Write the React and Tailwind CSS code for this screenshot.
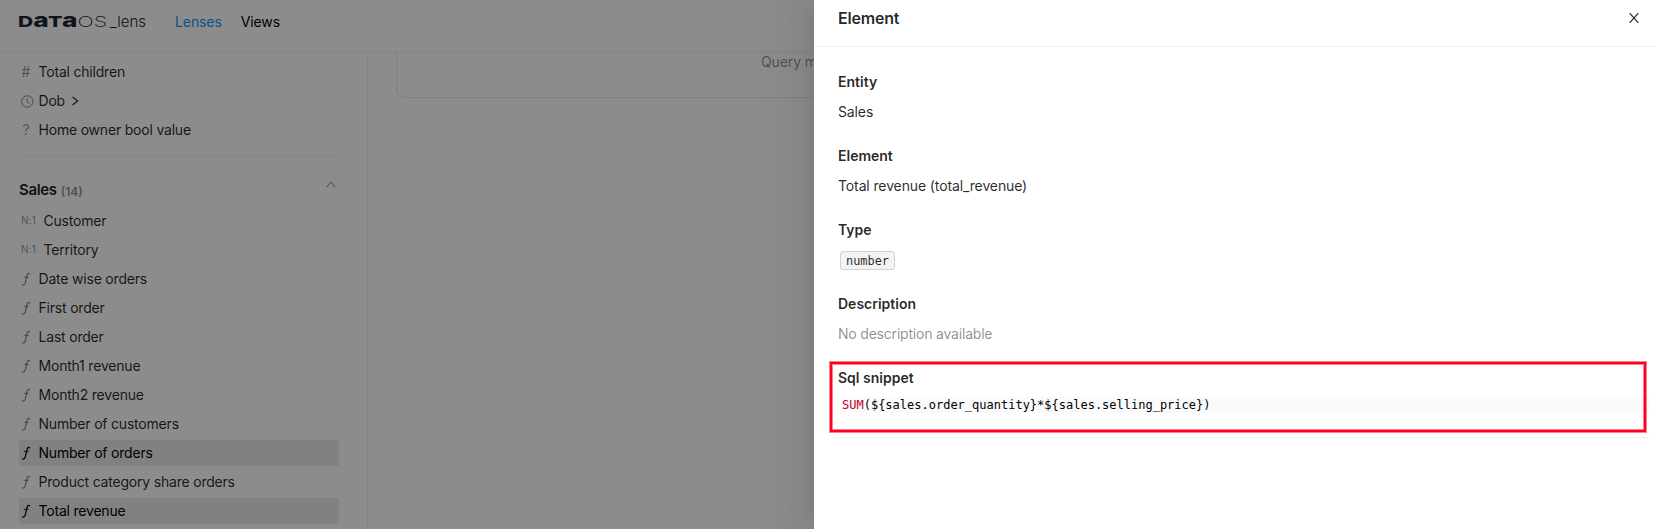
import React from "react";

const UI = "font-['Inter',sans-serif]";

function FieldIcon({ kind, active }) {
  const tone = active ? "text-black" : "text-black/45";
  if (kind === "time") {
    return (
      <svg className={`mt-[2px] h-[13px] w-[13px] ${tone}`} viewBox="0 0 13 13" fill="none" stroke="currentColor">
        <circle cx="6.3" cy="6.5" r="5.7" />
        <path d="M6.2 3v4l2.4 1.7" />
      </svg>
    );
  }
  if (kind === "fn") {
    return (
      <svg className={`mt-[2px] h-4 w-[10px] ${tone}`} viewBox="0 0 10 16" fill="none" stroke="currentColor" strokeLinecap="round">
        <path d="M8.7 2.8C7.8 1.8 6.7 2.2 6.2 4L4.2 12C3.7 13.8 2.6 14.4 1.4 13.8" strokeWidth="1.2" />
        <path d="M3.1 6.3h4.1" strokeWidth="0.9" />
      </svg>
    );
  }
  if (kind === "join") {
    return <span className={`text-[10px] tracking-[0.2px] ${tone}`}>N:1</span>;
  }
  return <span className={`w-[10px] text-center text-[14px] ${tone}`}>{kind}</span>;
}

function Field({ kind, label, active, expandable }) {
  return (
    <li className={`flex h-[26px] items-center rounded-[2px] pb-[2px] pl-[2px] ${active ? "bg-[#ececec] text-black" : "text-black/85"}`}>
      <span className={`flex shrink-0 items-center ${kind === "join" ? "w-[22.5px]" : "w-[17.5px]"}`}>
        <FieldIcon kind={kind} active={active} />
      </span>
      <span className="whitespace-nowrap tracking-[-0.2px]">{label}</span>
      {expandable && (
        <svg className="ml-[7px] mt-[2px] h-[10px] w-[7px]" viewBox="0 0 7 10" fill="none" stroke="currentColor" strokeWidth="1.1">
          <path d="M.5 1l5.2 4L.5 9" />
        </svg>
      )}
    </li>
  );
}

function Logo() {
  return (
    <svg className="h-[36px] w-[132px]" viewBox="-2 -6 132 36" fontFamily="Inter, sans-serif">
      <g fill="#202630" fontWeight="800">
        <text x="-1" y="17.2" fontSize="15.2" textLength="15.2" lengthAdjust="spacingAndGlyphs">D</text>
        <text x="14.3" y="17.2" fontSize="19.5" textLength="15.5" lengthAdjust="spacingAndGlyphs">a</text>
        <text x="29" y="17.2" fontSize="15.2" textLength="14.5" lengthAdjust="spacingAndGlyphs">T</text>
        <text x="43" y="17.2" fontSize="19.5" textLength="15.5" lengthAdjust="spacingAndGlyphs">a</text>
      </g>
      <text x="58.5" y="17.2" fontSize="15.2" fontWeight="200" textLength="29.5" lengthAdjust="spacingAndGlyphs" fill="#202630">OS</text>
      <text x="91" y="17" fontSize="15" fontWeight="300" textLength="36" lengthAdjust="spacingAndGlyphs" fill="#202630">_lens</text>
    </svg>
  );
}

function Detail({ title, children }) {
  return (
    <section className="h-[74px]">
      <h3 className="h-[30px] font-semibold leading-[22px]">{title}</h3>
      <div className="leading-[22px] tracking-[-0.12px]">{children}</div>
    </section>
  );
}

const customerFields = [
  { kind: "#", label: "Total children" },
  { kind: "time", label: "Dob", expandable: true },
  { kind: "?", label: "Home owner bool value" },
];

const salesFields = [
  { kind: "join", label: "Customer" },
  { kind: "join", label: "Territory" },
  { kind: "fn", label: "Date wise orders" },
  { kind: "fn", label: "First order" },
  { kind: "fn", label: "Last order" },
  { kind: "fn", label: "Month1 revenue" },
  { kind: "fn", label: "Month2 revenue" },
  { kind: "fn", label: "Number of customers" },
  { kind: "fn", label: "Number of orders", active: true },
  { kind: "fn", label: "Product category share orders" },
  { kind: "fn", label: "Total revenue", active: true },
];

export default function App() {
  return (
    <div className={`relative h-[529px] w-[1656px] overflow-hidden bg-white text-[14px] text-black/85 ${UI}`}>
      <div className="flex h-full flex-col">
        <header className="flex h-[53px] shrink-0 border-b border-[#eeeeee] pl-[17px] pt-[4px]">
          <Logo />
          <nav className="ml-[26px] mt-[6px] flex h-[23px] items-center gap-[19px] tracking-[-0.1px]">
            <span className="text-[#1890ff]">Lenses</span>
            <span className="text-black">Views</span>
          </nav>
        </header>
        <div className="flex min-h-0 flex-1">
          <aside className="w-[368px] shrink-0 border-r border-[#eeeeee] pl-[19px] pr-[28px] pt-[6px]">
            <ul className="flex flex-col gap-[3px]">
              {customerFields.map((f) => (
                <Field key={f.label} {...f} />
              ))}
            </ul>
            <div className="mt-[13px] h-px bg-[#eeeeee]" />
            <div className="mt-[19px] flex h-[28px] items-center">
              <h2 className="text-[15px] font-semibold tracking-[-0.35px] text-black/90">Sales</h2>
              <span className="ml-[4px] mt-[3px] text-[12px] font-semibold text-black/45">(14)</span>
              <svg className="mb-[11px] ml-auto mr-[3px] h-[7px] w-[10px] text-black/50" viewBox="0 0 10 7" fill="none" stroke="currentColor">
                <path d="M.8 6.2L5 1l4.2 5.2" />
              </svg>
            </div>
            <ul className="mt-[4px] flex flex-col gap-[3px]">
              {salesFields.map((f) => (
                <Field key={f.label} {...f} />
              ))}
            </ul>
          </aside>
          <main className="flex-1 pl-[28px] pr-7">
            <div className="h-[45px] rounded-b-[8px] border border-t-0 border-[#eaeaea] pl-[364px] leading-[18px] tracking-[-0.1px] text-black/45">
              Query metadata
            </div>
          </main>
        </div>
      </div>

      <div className="absolute inset-0 bg-black/45" />

      <div className="absolute inset-y-0 right-0 flex w-[842px] flex-col bg-white shadow-[-6px_0_16px_-8px_rgba(0,0,0,0.08),-9px_0_28px_rgba(0,0,0,0.05),-12px_0_48px_16px_rgba(0,0,0,0.03)]">
        <div className="flex h-[47px] shrink-0 items-start justify-between border-b border-[#f0f0f0] pl-6 pr-[17px] pt-[7px]">
          <h1 className="text-[16px] font-semibold leading-[22px] tracking-[-0.2px]">Element</h1>
          <svg className="mt-[6px] h-[10px] w-[10px]" viewBox="0 0 10 10" fill="none" stroke="#222" strokeWidth="1.2">
            <path d="M.7.2l8.6 9.6M9.3.2L.7 9.8" />
          </svg>
        </div>
        <div className="pl-6 pr-[7px] pt-[24px]">
          <Detail title="Entity">Sales</Detail>
          <Detail title="Element">Total revenue (total_revenue)</Detail>
          <Detail title="Type">
            <div className="pl-[2px] pt-[2px]">
              <code className="flex h-[19px] w-[55px] items-center justify-center rounded-[3px] border border-[#d2d2d2] bg-[#f3f3f3] font-['DejaVu_Sans_Mono',monospace] text-[11.9px] tracking-normal">
                number
              </code>
            </div>
          </Detail>
          <Detail title="Description">
            <span className="tracking-[-0.2px] text-black/45">No description available</span>
          </Detail>
          <section className="h-[71px] border-b border-[#f0f0f0]">
            <h3 className="font-semibold leading-[22px]">Sql snippet</h3>
            <pre className="mt-[8px] h-4 bg-[#fafafa] pl-1 font-['DejaVu_Sans_Mono',monospace] text-[12px] leading-4 text-black"><span className="text-[#c0001f]">SUM</span>{"(${sales.order_quantity}*${sales.selling_price})"}</pre>
          </section>
        </div>
        <div className="absolute left-[16px] top-[362px] h-[70px] w-[816px] border-2 border-[#ff0024] shadow-[0_0_0_1px_rgba(255,0,20,0.5),inset_0_0_0_1px_rgba(255,0,20,0.5)]" />
      </div>
    </div>
  );
}
